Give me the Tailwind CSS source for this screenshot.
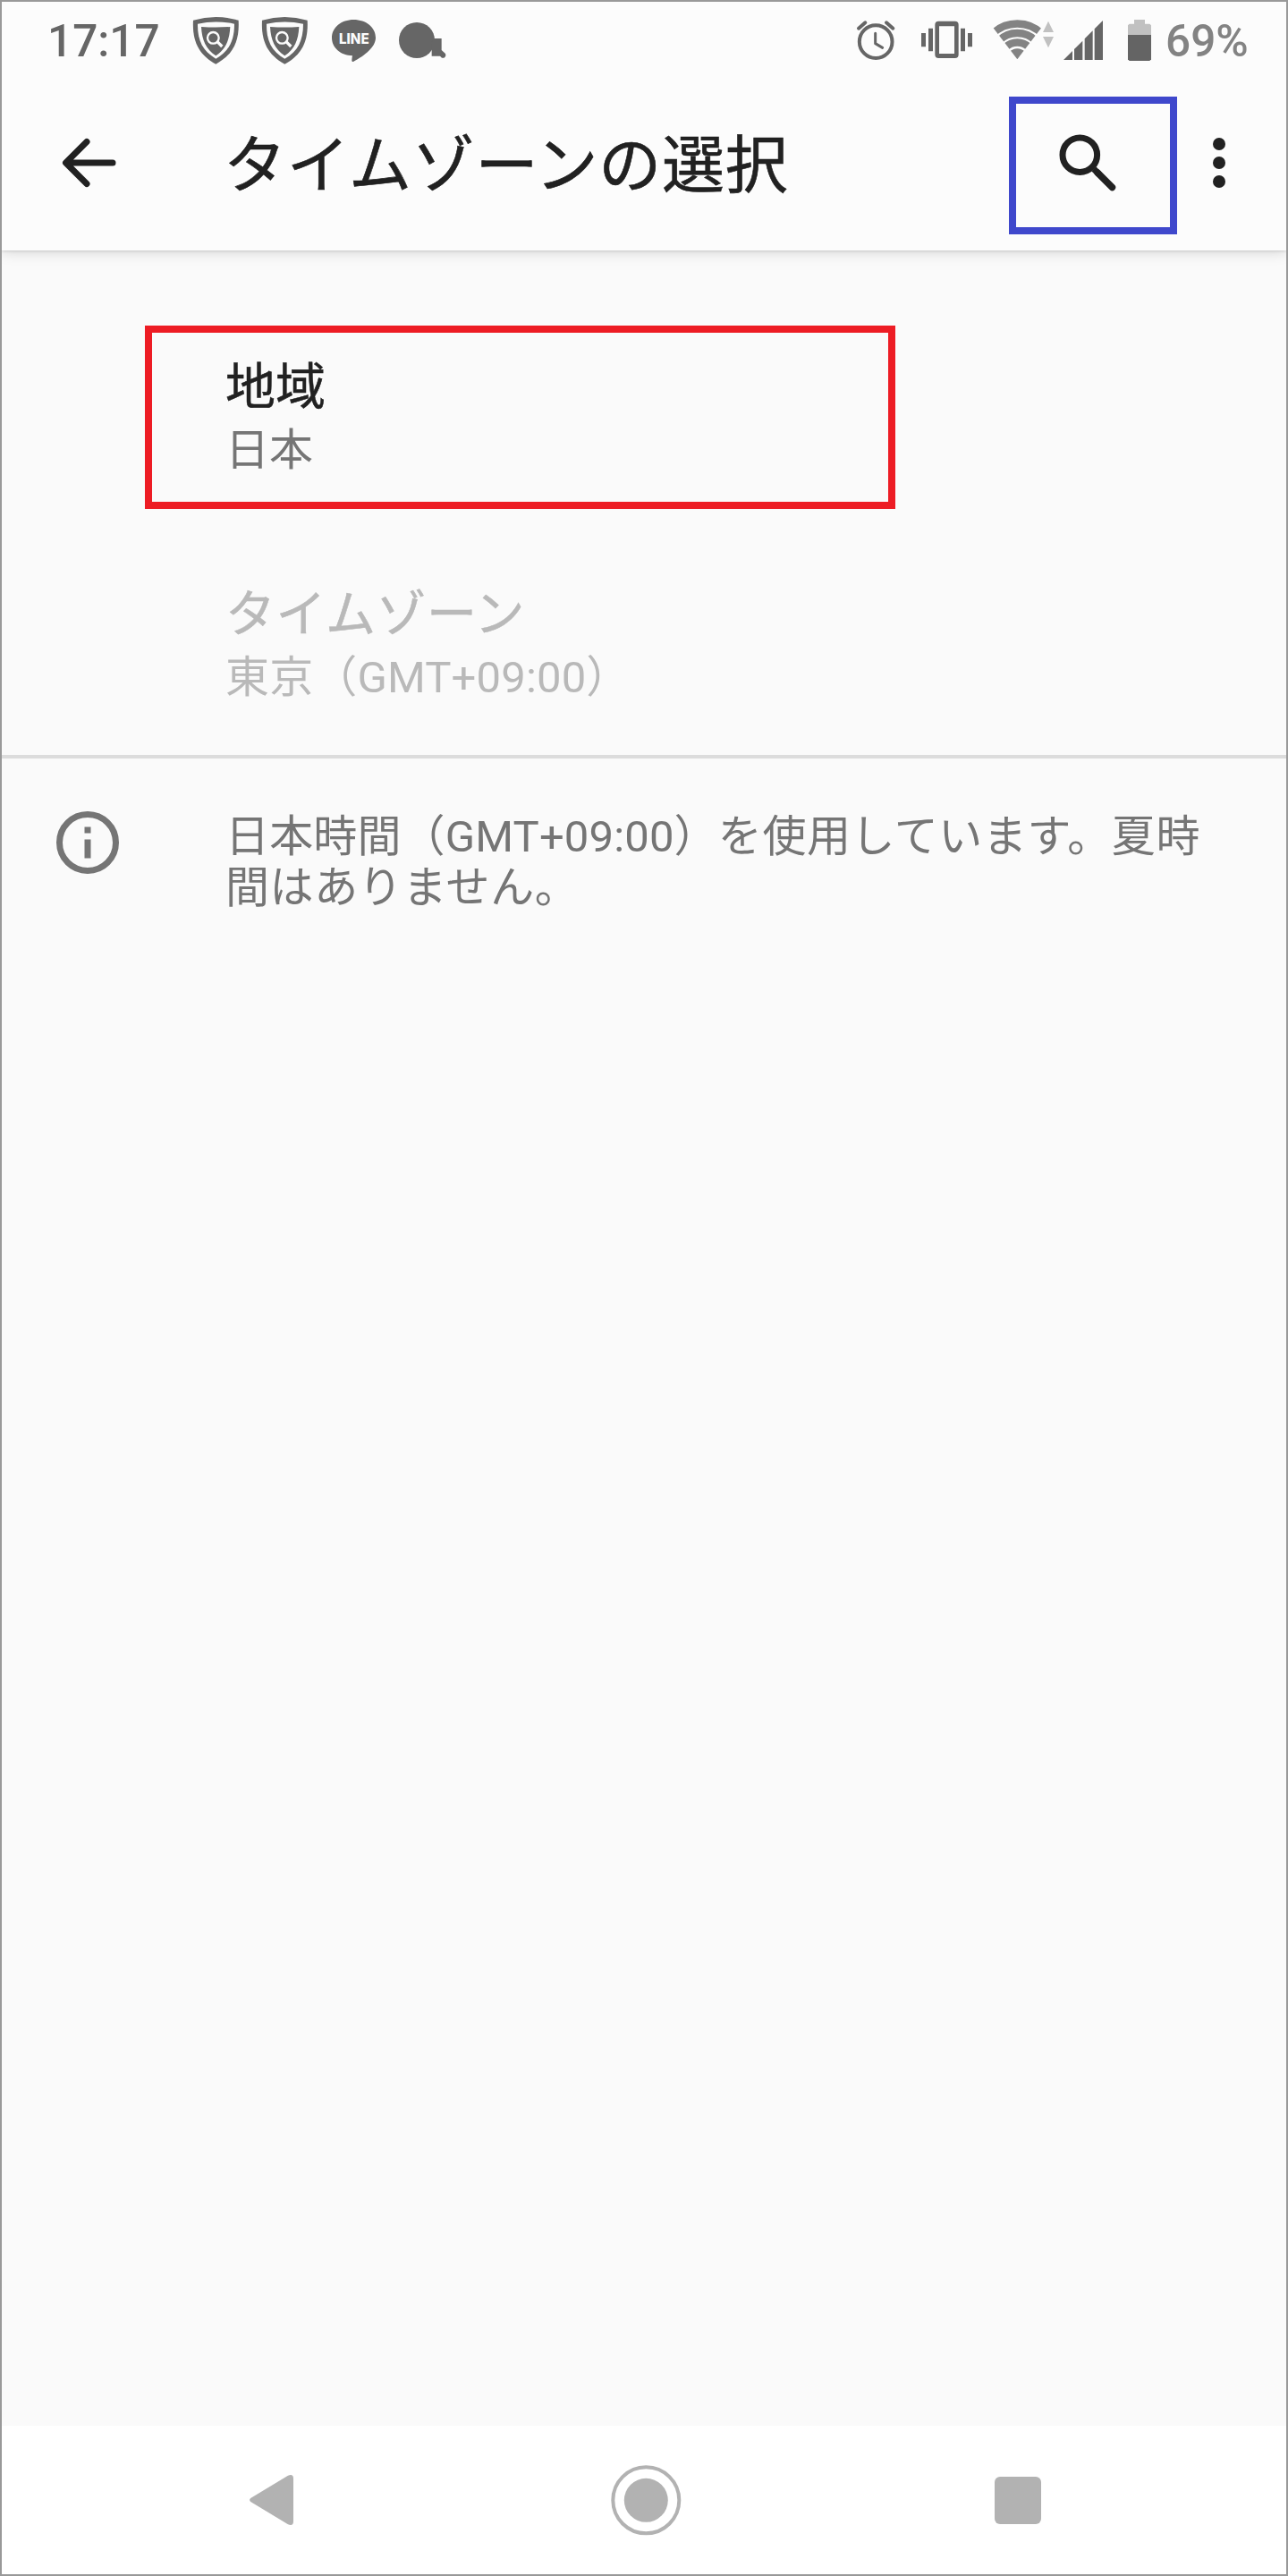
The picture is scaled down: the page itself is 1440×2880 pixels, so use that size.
<!DOCTYPE html>
<html lang="ja">
<head>
	<meta charset="UTF-8">
	<meta name="viewport" content="width=device-width, initial-scale=1.0">
	<title>タイムゾーンの選択</title>
	<script src="https://cdn.jsdelivr.net/npm/@tailwindcss/browser@4"></script>
</head>
<body class="bg-[#fafafa]">
	<div class="w-[1440px] h-[2880px] border-2 border-[#999999] bg-[#fafafa] flex flex-col overflow-hidden font-['Roboto','Noto_Sans_CJK_JP',sans-serif]">

		<!-- Status bar and app bar -->
		<header class="h-[278px] shrink-0 bg-[#fcfcfc] relative shadow-[0_3px_14px_rgba(0,0,0,0.13),0_1px_3px_rgba(0,0,0,0.12)]">
			<div class="h-[88px] pt-[13px] flex items-start text-[#666666]">
				<div class="w-[212px] pl-[51px] pt-px text-[49.5px] leading-[60px] font-medium whitespace-nowrap">17:17</div>
				<svg class="w-[55px] h-[60px]" viewBox="642 45 165 180" fill="currentColor">
					<path d="M648 68Q724 46 800 68C804 140 780 184 724 215C668 184 644 140 648 68Z"/>
					<path fill="#fcfcfc" d="M663 80Q724 67 786 80C786 136 768 172 724 197C680 172 662 136 663 80Z"/>
					<path d="M675 90Q724 93 772 90C770 134 757 165 724 187C691 165 677 134 675 90Z"/>
					<circle cx="715" cy="127" r="19" fill="none" stroke="#fcfcfc" stroke-width="7"/>
					<path stroke="#fcfcfc" stroke-width="10" d="M729 140L745 156"/>
				</svg>
				<svg class="ml-[22px] w-[55px] h-[60px]" viewBox="642 45 165 180" fill="currentColor">
					<path d="M648 68Q724 46 800 68C804 140 780 184 724 215C668 184 644 140 648 68Z"/>
					<path fill="#fcfcfc" d="M663 80Q724 67 786 80C786 136 768 172 724 197C680 172 662 136 663 80Z"/>
					<path d="M675 90Q724 93 772 90C770 134 757 165 724 187C691 165 677 134 675 90Z"/>
					<circle cx="715" cy="127" r="19" fill="none" stroke="#fcfcfc" stroke-width="7"/>
					<path stroke="#fcfcfc" stroke-width="10" d="M729 140L745 156"/>
				</svg>
				<svg class="ml-[23px] w-[53px] h-[60px]" viewBox="1107 45 159 180" fill="currentColor">
					<path d="M1186 66C1228 66 1260 92 1260 127C1260 158 1222 188 1186 206C1179 209 1179 204 1182 187C1142 186 1113 160 1113 127C1113 92 1145 66 1186 66Z"/>
					<text x="1137" y="147" font-size="47" font-weight="800" textLength="101" lengthAdjust="spacingAndGlyphs" fill="#fcfcfc" class="font-['Inter',sans-serif]">LINE</text>
				</svg>
				<svg class="ml-[22px] w-[56px] h-[60px]" viewBox="1332 45 168 180" fill="currentColor">
					<circle cx="1398" cy="135" r="60"/>
					<path d="M1450 129H1481V168L1494 180A10 10 0 0 1 1482 194L1476 188H1448V150Z"/>
				</svg>

				<svg class="ml-auto w-[46px] h-[60px]" viewBox="108 45 138 180" fill="none" stroke="currentColor" stroke-linecap="round">
					<circle cx="177.500" cy="140" r="55" stroke-width="12"/>
					<path stroke-width="9" stroke-linejoin="round" d="M176 112V146L200 160"/>
					<path stroke-width="12" d="M120 95L142 76M213 76L235 95"/>
				</svg>
				<svg class="ml-[26px] w-[61px] h-[60px]" viewBox="324 45 183 180" fill="currentColor">
					<path fill-rule="evenodd" d="M388 71H443A12 12 0 0 1 455 83V183A12 12 0 0 1 443 195H388A12 12 0 0 1 376 183V83A12 12 0 0 1 388 71ZM390 88V180H441V88Z"/>
					<path d="M354 95h15v77h-15zM330 111h15v46h-15zM462 95h15v77h-15zM486 111h15v46h-15z"/>
				</svg>
				<svg class="ml-[20px] w-[71px] h-[60px]" viewBox="567 45 213 180">
					<clipPath id="wifiFan"><path d="M652 199L548 63H756Z"/></clipPath>
					<g clip-path="url(#wifiFan)" fill="none" stroke="#838383">
						<circle cx="652" cy="199" r="119.500" stroke-width="25"/>
						<circle cx="652" cy="199" r="88" stroke-width="25"/>
						<circle cx="652" cy="199" r="56.500" stroke-width="25"/>
						<circle cx="652" cy="199" r="18" stroke-width="36"/>
					</g>
					<path fill="#c1c1c1" d="M756 71L774 108H738ZM738 123H774L756 160Z"/>
				</svg>
				<svg class="ml-[7px] w-[48px] h-[60px]" viewBox="801 45 144 180" fill="currentColor">
					<path d="M807 201L837 171V201ZM843 201V165L871 137V201ZM878 201V130L905 103V201ZM911 201V97L939 69V201Z"/>
				</svg>
				<svg class="ml-[24px] w-[30px] h-[60px]" viewBox="1017 45 90 180">
					<path fill="#c1c1c1" d="M1044 66H1080V80H1096L1101 85V118H1023V85L1028 80H1044Z"/>
					<path fill="#646464" d="M1023 117H1101V199L1096 204H1028L1023 199Z"/>
				</svg>
				<div class="w-[135px] ml-[14px] pt-px text-[49.5px] leading-[60px] font-medium text-[#838383]">69%</div>
			</div>

			<div class="h-[190px] pt-[18px] flex items-start text-[#212121]">
				<svg class="ml-[62px] mt-[34px] w-[72px] h-[80px]" viewBox="64 142 72 80" fill="none" stroke="currentColor" stroke-width="7" stroke-linecap="round" stroke-linejoin="round">
					<path d="M126 182H75M97 158.500L73.500 182L97 205.500"/>
				</svg>
				<h1 class="ml-[114px] mt-[28px] text-[70px] leading-[100px] tracking-[0.7px] whitespace-nowrap [-webkit-text-stroke:0.6px_#212121]">タイムゾーンの選択</h1>
				<button class="ml-auto w-[188px] h-[154px] border-8 border-[#3f48cc] flex">
					<svg class="w-[172px] h-[138px]" viewBox="1136 116 172 138" fill="none" stroke="currentColor">
						<circle cx="1207.300" cy="173.200" r="19.300" stroke-width="7"/>
						<path stroke-width="7.500" stroke-linecap="round" d="M1227 193L1243.500 209.500"/>
						<path stroke-width="7" d="M1223 189L1229 195"/>
					</svg>
				</button>
				<svg class="ml-[37px] mr-[65px] mt-[39px] w-5 h-[70px]" viewBox="0 0 20 70" fill="currentColor">
					<circle cx="10" cy="14" r="7"/>
					<circle cx="10" cy="35" r="7"/>
					<circle cx="10" cy="56" r="7"/>
				</svg>
			</div>
		</header>

		<!-- Settings list -->
		<main class="grow">
			<section class="h-[568px] pt-[84px] pl-[160px] border-b-4 border-[#dcdcdc]">
				<div class="w-[839px] h-[205px] border-8 border-[#ed1c24] pl-[82px] pt-[26px]">
					<div class="text-[56px] leading-[70px] text-[#212121] [-webkit-text-stroke:0.5px_#212121]">地域</div>
					<div class="text-[49px] leading-[72px] text-[#757575]">日本</div>
				</div>
				<div class="pl-[90px] pt-[83px] text-[#b9b9b9]">
					<div class="text-[56px] leading-[70px] tracking-[0.5px] [-webkit-text-stroke:0.5px_#b9b9b9]">タイムゾーン</div>
					<div class="text-[49px] leading-[72px] tracking-[0.15px]">東京（GMT+09:00）</div>
				</div>
			</section>
			<section class="flex items-start pl-[54px] pt-[52px] text-[#757575]">
				<svg class="w-[84px] h-[84px]" viewBox="0 0 24 24" fill="currentColor">
					<circle cx="12" cy="12" r="9" fill="none" stroke="currentColor" stroke-width="2"/>
					<path d="M11 7h2v2h-2zM11 11h2v6h-2z"/>
				</svg>
				<p class="ml-[112px] mt-[7px] text-[49px] leading-[57px] tracking-[0.15px] whitespace-nowrap">日本時間（GMT+09:00）<span class="tracking-[0.6px]">を使用しています。夏時<br>間はありません。</span></p>
			</section>
		</main>

		<!-- Navigation bar -->
		<nav class="h-[166px] shrink-0 bg-white flex items-center pl-[277px] text-[#b2b2b2]">
			<svg class="w-[50px] h-[58px]" viewBox="0 0 50 58" fill="currentColor">
				<path d="M1.200 27L43 1.700Q49 -0.500 49 5V53Q49 58.500 43 56.300L1.200 31Q-1 29 1.200 27Z"/>
			</svg>
			<svg class="ml-[353px] w-20 h-20" viewBox="0 0 80 80">
				<circle cx="40.300" cy="40.300" r="37" fill="none" stroke="currentColor" stroke-width="4"/>
				<circle cx="40.300" cy="40.300" r="24.500" fill="currentColor"/>
			</svg>
			<div class="ml-[350px] mt-px w-[52px] h-[53px] rounded-[6px] bg-[#b2b2b2]"></div>
		</nav>
	</div>
</body>
</html>
